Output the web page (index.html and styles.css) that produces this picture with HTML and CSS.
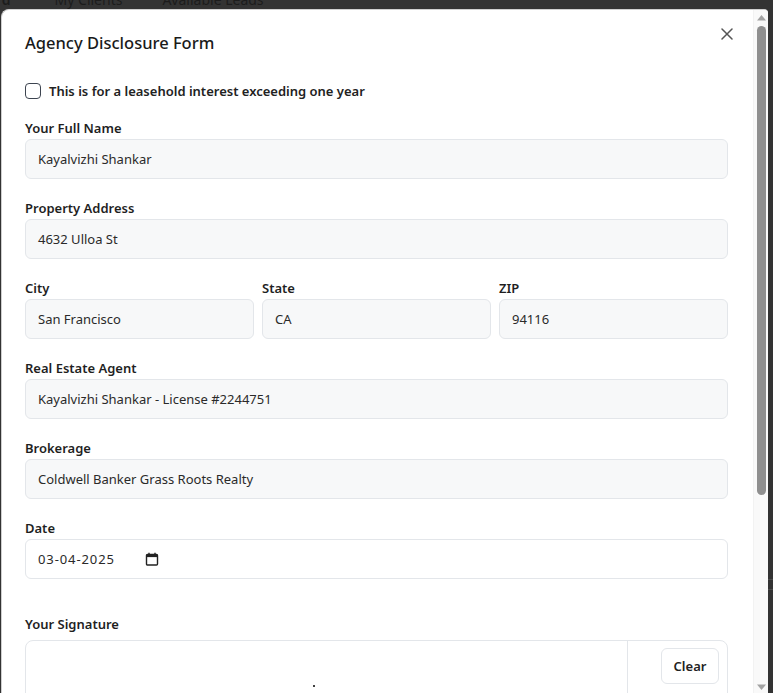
FILE: index.html
```html
<!DOCTYPE html>
<html lang="en">
<head>
<meta charset="utf-8">
<title>Agency Disclosure Form</title>
<link rel="stylesheet" href="styles.css">
</head>
<body>
  <div class="page-nav">
    <div class="page-nav-inner">
      <span class="nav-item nav-brand">rd</span>
      <span class="nav-item">My Clients</span>
      <span class="nav-item">Available Leads</span>
    </div>
  </div>
  <div class="stage">
    <div class="modal">
      <div class="modal-body">
        <div class="modal-header">
          <h2 class="modal-title">Agency Disclosure Form</h2>
          <button class="close-btn" aria-label="Close">
            <svg width="12" height="12" viewBox="0 0 12 12"><path d="M1 1 L11 11 M11 1 L1 11" stroke="#555" stroke-width="1.5" stroke-linecap="round"/></svg>
          </button>
        </div>
        <label class="check-row">
          <span class="checkbox"></span>
          <span class="check-label">This is for a leasehold interest exceeding one year</span>
        </label>

        <div class="field">
          <div class="label">Your Full Name</div>
          <div class="input">Kayalvizhi Shankar</div>
        </div>
        <div class="field">
          <div class="label">Property Address</div>
          <div class="input">4632 Ulloa St</div>
        </div>
        <div class="field-row">
          <div class="field">
            <div class="label">City</div>
            <div class="input">San Francisco</div>
          </div>
          <div class="field">
            <div class="label">State</div>
            <div class="input">CA</div>
          </div>
          <div class="field">
            <div class="label">ZIP</div>
            <div class="input">94116</div>
          </div>
        </div>
        <div class="field">
          <div class="label">Real Estate Agent</div>
          <div class="input">Kayalvizhi Shankar - License #2244751</div>
        </div>
        <div class="field">
          <div class="label">Brokerage</div>
          <div class="input">Coldwell Banker Grass Roots Realty</div>
        </div>
        <div class="field field-date">
          <div class="label">Date</div>
          <div class="input input-white">
            <span class="date-text">03-04-2025</span>
            <svg class="cal-icon" width="14" height="14" viewBox="0 0 14 14"><rect x="1.5" y="2.5" width="11" height="10.5" rx="1" fill="none" stroke="#222" stroke-width="1.4"/><rect x="1.5" y="2.5" width="11" height="2.6" fill="#222"/><path d="M4 0.8 V3 M10 0.8 V3" stroke="#222" stroke-width="1.4"/></svg>
          </div>
        </div>

        <div class="sig-label">Your Signature</div>
        <div class="sig-box">
          <div class="sig-canvas"><span class="sig-dot"></span></div>
          <div class="sig-actions"><button class="btn btn-clear">Clear</button></div>
        </div>

        <div class="modal-footer">
          <button class="btn">Cancel</button>
          <button class="btn btn-primary">Submit</button>
        </div>
      </div>
      <div class="scrollbar" aria-hidden="true">
        <div class="sb-btn">
          <svg width="9" height="6" viewBox="0 0 9 6"><path d="M4.5 0 L9 5.5 L0 5.5 Z" fill="#a3a3a3"/></svg>
        </div>
        <div class="sb-track"><div class="sb-thumb"></div></div>
        <div class="sb-btn sb-btn-down">
          <svg width="9" height="6" viewBox="0 0 9 6"><path d="M0 0.5 L9 0.5 L4.5 6 Z" fill="#a3a3a3"/></svg>
        </div>
      </div>
    </div>
    <div class="side-strip">
      <div class="side-lines"></div>
    </div>
  </div>
</body>
</html>
```

FILE: styles.css
```css
* { box-sizing: border-box; }

html, body {
  margin: 0;
  padding: 0;
  height: 100%;
  overflow: hidden;
}

body {
  background: #333333;
  font-family: "Noto Sans", "Open Sans", sans-serif;
  color: #212529;
}

.page-nav {
  height: 9px;
  overflow: hidden;
}

.page-nav-inner {
  display: flex;
  margin-top: -10px;
  height: 20px;
  line-height: 20px;
  font-size: 14px;
  color: #1c1c1c;
}

.nav-item { margin-right: 40px; white-space: nowrap; }
.nav-brand { margin-left: -4px; margin-right: 44px; font-weight: 600; }

.stage {
  display: flex;
  height: calc(100% - 9px);
}

.modal {
  width: 767px;
  margin-left: 1px;
  flex: none;
  display: flex;
  background: #fff;
  border: 1px solid #cfcfcf;
  border-right: none;
  border-bottom: none;
  border-top-left-radius: 8px;
  border-top-right-radius: 4px;
  overflow: hidden;
}

.modal-body {
  flex: 1;
  min-width: 0;
  overflow: hidden;
  padding: 19px 25px 24px 23px;
}

.scrollbar {
  width: 15px;
  flex: none;
  display: flex;
  flex-direction: column;
  background: #f9f9f9;
  border-left: 1px solid #f2f2f2;
}

.sb-btn {
  height: 15px;
  flex: none;
  display: flex;
  align-items: center;
  justify-content: center;
}

.sb-btn-down { align-items: flex-start; padding-top: 6px; }

.sb-track {
  flex: 1;
  padding-top: 1px;
  display: flex;
  justify-content: center;
}

.sb-thumb {
  width: 9px;
  height: 469px;
  background: #8f8f8f;
  border-radius: 5px;
}

.side-strip {
  flex: 1;
  background: #333;
}

.side-lines {
  margin-top: 570px;
  height: 11px;
  border-top: 1px solid #4a4a4a;
  border-bottom: 1px solid #4a4a4a;
}

.modal-header {
  display: flex;
  justify-content: space-between;
  align-items: flex-start;
  height: 28px;
}

.modal-title {
  margin: 0;
  font-size: 16.5px;
  line-height: 28px;
  font-weight: 500;
  color: #1a1a1a;
}

.close-btn {
  border: none;
  background: none;
  padding: 0;
  width: 14px;
  height: 14px;
  margin-top: -2px;
  margin-right: -6px;
  display: flex;
  align-items: center;
  justify-content: center;
}

.check-row {
  display: flex;
  align-items: center;
  gap: 8px;
  height: 20px;
  margin-top: 24px;
  margin-bottom: 17px;
}

.checkbox {
  width: 16px;
  height: 16px;
  border: 1.5px solid #3d4450;
  border-radius: 4px;
  background: #fff;
  flex: none;
}

.check-label {
  font-size: 13px;
  font-weight: 600;
  color: #222;
}

.field { margin-bottom: 19px; }

.label {
  font-size: 13px;
  font-weight: 600;
  line-height: 20px;
  margin-bottom: 1px;
  color: #1f1f1f;
}

.input {
  height: 40px;
  background: #f7f8f9;
  border: 1px solid #e3e6ea;
  border-radius: 6px;
  padding: 0 12px;
  display: flex;
  align-items: center;
  font-size: 13px;
  color: #2a2a2a;
}

.input-white { background: #fff; }

.field-row {
  display: grid;
  grid-template-columns: 1fr 1fr 1fr;
  gap: 8px;
}

.field-date { margin-bottom: 35px; }

.date-text {
  letter-spacing: 0.9px;
  width: 107px;
}

.cal-icon { display: block; }

.sig-label {
  font-size: 13px;
  font-weight: 600;
  line-height: 20px;
  margin-bottom: 6px;
  color: #1f1f1f;
}

.sig-box {
  display: flex;
  height: 200px;
  border: 1px solid #e3e6ea;
  border-radius: 8px;
}

.sig-canvas {
  flex: 1;
  position: relative;
  border-right: 1px solid #e3e6ea;
}

.sig-dot {
  position: absolute;
  left: 287px;
  top: 44px;
  width: 2px;
  height: 2px;
  border-radius: 50%;
  background: #000;
}

.sig-actions {
  width: 99px;
  padding: 7px 8px;
  display: flex;
  justify-content: flex-end;
  align-items: flex-start;
}

.btn {
  font-family: inherit;
  height: 36px;
  padding: 0 13px;
  font-size: 13px;
  font-weight: 600;
  color: #222;
  background: #fff;
  border: 1px solid #e3e6ea;
  border-radius: 6px;
}

.btn-clear {
  width: 58px;
  padding: 0;
}

.modal-footer {
  display: flex;
  justify-content: flex-end;
  gap: 8px;
  margin-top: 24px;
}

.btn-primary {
  background: #111827;
  color: #fff;
  border-color: #111827;
}
```
